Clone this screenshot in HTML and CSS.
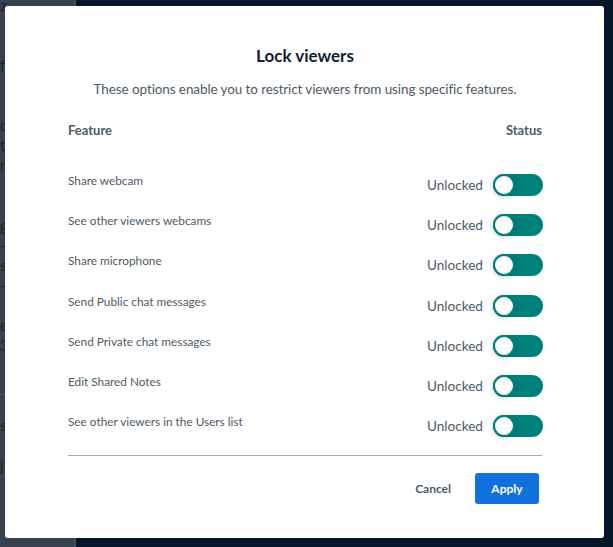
FILE: index.html
```html
<!DOCTYPE html>
<html>
<head>
<meta charset="utf-8">
<link rel="stylesheet" href="styles.css">
</head>
<body>
<div class="app">
  <aside class="sidebar">
    <div class="ln">z</div><div class="ln"></div><div class="ln"></div><div class="ln">f</div>
    <div class="ln"></div><div class="ln"></div><div class="ln">c</div><div class="ln">t</div>
    <div class="ln">n</div><div class="ln"></div><div class="ln"></div><div class="ln">g</div>
    <div class="ln">-</div><div class="ln">s</div><div class="ln">-</div><div class="ln"></div>
    <div class="ln">e</div><div class="ln">3</div><div class="ln"></div><div class="ln rule"></div>
    <div class="ln"></div><div class="ln">s</div><div class="ln"></div><div class="ln">j</div>
  </aside>
  <main class="stage"></main>
</div>

<div class="modal">
  <h1 class="title">Lock viewers</h1>
  <p class="subtitle">These options enable you to restrict viewers from using specific features.</p>
  <div class="head">
    <span>Feature</span>
    <span>Status</span>
  </div>
  <div class="rows">
    <div class="row"><span class="label">Share webcam</span><span class="status"><span class="state">Unlocked</span><span class="toggle"><span class="knob"></span></span></span></div>
    <div class="row"><span class="label">See other viewers webcams</span><span class="status"><span class="state">Unlocked</span><span class="toggle"><span class="knob"></span></span></span></div>
    <div class="row"><span class="label">Share microphone</span><span class="status"><span class="state">Unlocked</span><span class="toggle"><span class="knob"></span></span></span></div>
    <div class="row"><span class="label">Send Public chat messages</span><span class="status"><span class="state">Unlocked</span><span class="toggle"><span class="knob"></span></span></span></div>
    <div class="row"><span class="label">Send Private chat messages</span><span class="status"><span class="state">Unlocked</span><span class="toggle"><span class="knob"></span></span></span></div>
    <div class="row"><span class="label">Edit Shared Notes</span><span class="status"><span class="state">Unlocked</span><span class="toggle"><span class="knob"></span></span></span></div>
    <div class="row"><span class="label">See other viewers in the Users list</span><span class="status"><span class="state">Unlocked</span><span class="toggle"><span class="knob"></span></span></span></div>
  </div>
  <div class="footer">
    <button class="cancel">Cancel</button>
    <button class="apply">Apply</button>
  </div>
</div>
</body>
</html>
```
FILE: styles.css
```css
* { box-sizing: border-box; }
html, body { margin: 0; padding: 0; }
body {
  width: 613px;
  height: 547px;
  overflow: hidden;
  background: #06162a;
  font-family: Lato, "Noto Sans", sans-serif;
}
.app {
  display: flex;
  height: 547px;
}
.sidebar {
  width: 76px;
  background: #38424e;
  border-right: 2px solid #46505c;
  color: #1a2430;
  font-size: 15px;
}
.sidebar .ln {
  height: 20px;
  line-height: 20px;
}
.sidebar .ln:first-child { margin-top: -5px; }
.sidebar .rule {
  line-height: 15px;
  height: 20px;
  border-bottom: 1px solid #4b5561;
}
.stage { flex: 1; background: #06162a; }

.modal {
  position: absolute;
  left: 5px;
  top: 6px;
  width: 599px;
  height: 532px;
  background: #ffffff;
  border-radius: 3px;
  padding: 40px 62px 0 63px;
  color: #4e5a66;
}
.title {
  margin: 0;
  font-size: 17px;
  line-height: 20px;
  font-weight: 700;
  text-align: center;
  color: #0f1c2e;
}
.subtitle {
  margin: 13px 0 0;
  font-size: 13.5px;
  letter-spacing: -0.1px;
  line-height: 20px;
  text-align: center;
  color: #4e5a66;
}
.head {
  margin-top: 22px;
  display: flex;
  justify-content: space-between;
  font-size: 13px;
  line-height: 18px;
  font-weight: 700;
  color: #4e5a66;
}
.rows { margin-top: 35px; }
.row {
  height: 40.2px;
  display: flex;
  justify-content: space-between;
  align-items: flex-start;
}
.label {
  font-size: 11.8px;
  line-height: 16px;
  margin-top: -1px;
}
.status {
  display: flex;
  align-items: center;
  gap: 10px;
  height: 22px;
}
.state {
  font-size: 13.6px;
  line-height: 18px;
}
.toggle {
  width: 50px;
  height: 22px;
  border-radius: 11px;
  background: #00807b;
  position: relative;
  margin-right: -1px;
}
.knob {
  position: absolute;
  left: 0;
  top: 0;
  width: 22px;
  height: 22px;
  border-radius: 50%;
  background: #fafafa;
  border: 2px solid #00807b;
  box-shadow: 0 1px 6px rgba(0,0,0,0.18);
}
.footer {
  border-top: 1px solid #a7aeb6;
  padding-top: 17px;
  display: flex;
  justify-content: flex-end;
  align-items: center;
  gap: 20px;
  padding-right: 3px;
}
button {
  font-family: Lato, "Noto Sans", sans-serif;
  font-weight: 700;
  font-size: 12px;
  border: none;
  cursor: pointer;
}
.cancel {
  background: none;
  color: #4e5a66;
  padding: 0 4px;
  height: 31px;
}
.apply {
  width: 64px;
  height: 31px;
  border-radius: 3px;
  background: #1170dc;
  color: #ffffff;
}
```
